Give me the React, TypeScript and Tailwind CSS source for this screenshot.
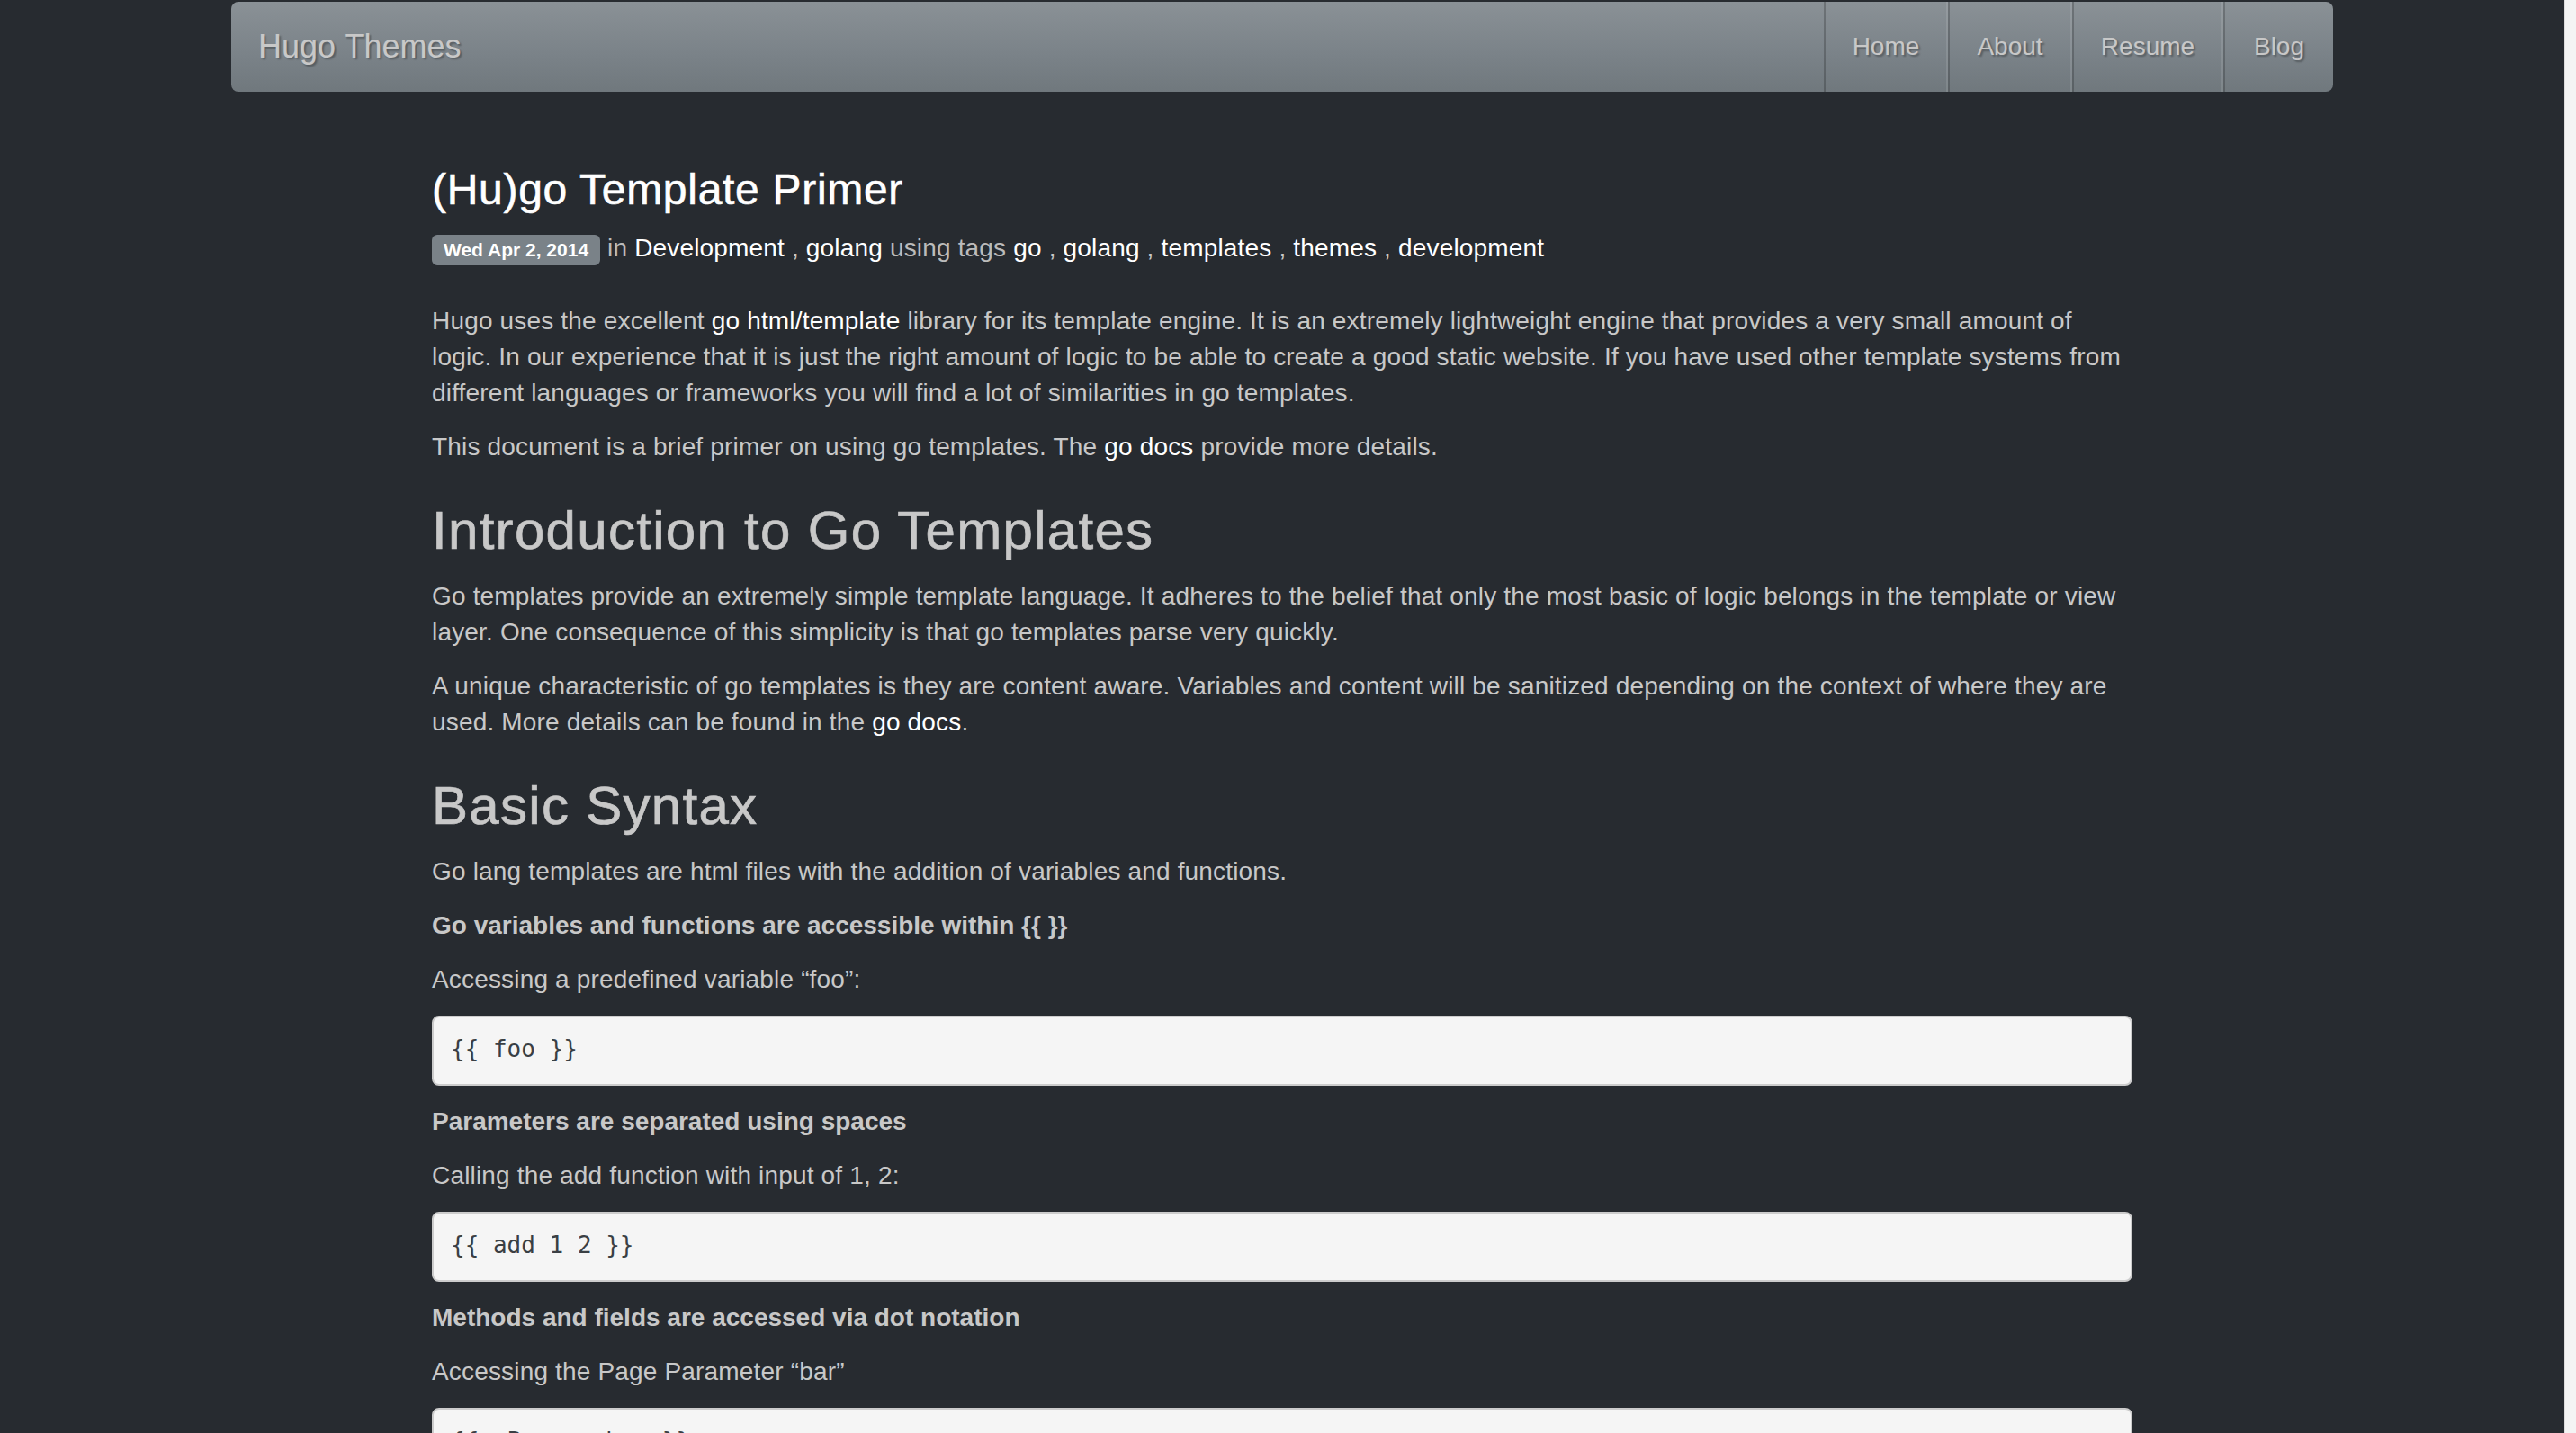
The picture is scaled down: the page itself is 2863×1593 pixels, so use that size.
import type { ReactNode } from 'react';

const NAV_LINKS = [
    { label: 'Home', width: 'w-[138px]' },
    { label: 'About', width: 'w-[138px]' },
    { label: 'Resume', width: 'w-[168px]' },
    { label: 'Blog', width: 'w-[122px]' },
];

const META_LINKS = {
    categories: ['Development', 'golang'],
    tags: ['go', 'golang', 'templates', 'themes', 'development'],
};

function A({ children }: { children: ReactNode }) {
    return <a className="text-white no-underline cursor-pointer">{children}</a>;
}

function P({ children, bold = false }: { children: ReactNode; bold?: boolean }) {
    return (
        <p className={bold ? 'mb-[20px] font-bold tracking-normal' : 'mb-[20px]'}>
            {children}
        </p>
    );
}

function H2({ children }: { children: ReactNode }) {
    return (
        <h2 className="mt-[40px] mb-[20px] text-[60px] leading-[66px] font-normal tracking-[1.3px] text-[#c8c8c8] [-webkit-text-stroke:0.7px_#c8c8c8]">
            {children}
        </h2>
    );
}

function Pre({ code }: { code: string }) {
    return (
        <pre className="mb-[20px] h-[78px] rounded-[8px] border-2 border-[#cccccc] bg-[#f5f5f5] px-[19px] pt-[16px] pb-[20px] font-['DejaVu_Sans_Mono',monospace] text-[26px] leading-[38px] tracking-normal text-[#3a3f44] overflow-hidden">
            {code}
        </pre>
    );
}

function Sep() {
    return <span className="text-[#c8c8c8]"> , </span>;
}

export default function App() {
    return (
        <div className="flex h-[1593px] w-full overflow-hidden bg-[#272b30] font-['Liberation_Sans',Arial,sans-serif] text-[28px] leading-[40px] tracking-[0.17px] text-[#c8c8c8]">
            <div className="w-[2850px] shrink-0">
                {/* Navbar */}
                <nav className="mx-auto mt-[2px] flex h-[100px] w-[2336px] items-stretch justify-between rounded-[8px] bg-[linear-gradient(#8a9196,#7a8288_60%,#70787d)] tracking-normal [text-shadow:2px_2px_2px_rgba(0,0,0,0.3)]">
                    <a className="flex items-center px-[30px] text-[36px] text-[#c8c8c8]">Hugo Themes</a>
                    <ul className="flex items-stretch">
                        {NAV_LINKS.map(item => (
                            <li
                                key={item.label}
                                className={`flex items-center justify-center border-l-2 border-r-2 border-l-[rgba(0,0,0,0.2)] border-r-[rgba(255,255,255,0.1)] text-[28px] text-[#c8c8c8] last:border-r-0 ${item.width}`}
                            >
                                {item.label}
                            </li>
                        ))}
                    </ul>
                </nav>

                {/* Post */}
                <div className="mx-auto w-[2340px]">
                    <article className="ml-[225px] w-[1890px] whitespace-nowrap">
                        <h1 className="mt-[82px] text-[48px] leading-[53px] font-normal tracking-[0.7px] text-white [-webkit-text-stroke:0.6px_white]">
                            (Hu)go Template Primer
                        </h1>

                        <div className="mt-[19px]">
                            <span className="inline-block rounded-[6px] bg-[#7a8288] px-[13px] pt-[6px] pb-[7px] text-[21px] leading-[21px] font-bold tracking-normal text-white">
                                Wed Apr 2, 2014
                            </span>{' '}
                            <span className="text-[#bbbbbb]">in </span>
                            {META_LINKS.categories.map((c, i) => (
                                <span key={c}>
                                    {i > 0 && <Sep />}
                                    <A>{c}</A>
                                </span>
                            ))}
                            <span className="text-[#bbbbbb]"> using tags </span>
                            {META_LINKS.tags.map((t, i) => (
                                <span key={t + i}>
                                    {i > 0 && <Sep />}
                                    <A>{t}</A>
                                </span>
                            ))}
                        </div>

                        <div className="mt-[41px]">
                            <P>
                                Hugo uses the excellent <A>go html/template</A> library for its template engine. It is an extremely lightweight engine that provides a very small amount of
                                <br />
                                logic. In our experience that it is just the right amount of logic to be able to create a good static website. If you have used other template systems from
                                <br />
                                different languages or frameworks you will find a lot of similarities in go templates.
                            </P>
                            <P>
                                This document is a brief primer on using go templates. The <A>go docs</A> provide more details.
                            </P>

                            <H2>Introduction to Go Templates</H2>
                            <P>
                                Go templates provide an extremely simple template language. It adheres to the belief that only the most basic of logic belongs in the template or view
                                <br />
                                layer. One consequence of this simplicity is that go templates parse very quickly.
                            </P>
                            <P>
                                A unique characteristic of go templates is they are content aware. Variables and content will be sanitized depending on the context of where they are
                                <br />
                                used. More details can be found in the <A>go docs</A>.
                            </P>

                            <H2>Basic Syntax</H2>
                            <P>Go lang templates are html files with the addition of variables and functions.</P>
                            <P bold>Go variables and functions are accessible within {'{{ }}'}</P>
                            <P>Accessing a predefined variable “foo”:</P>
                            <Pre code="{{ foo }}" />
                            <P bold>Parameters are separated using spaces</P>
                            <P>Calling the add function with input of 1, 2:</P>
                            <Pre code="{{ add 1 2 }}" />
                            <P bold>Methods and fields are accessed via dot notation</P>
                            <P>Accessing the Page Parameter “bar”</P>
                            <Pre code="{{ .Params.bar }}" />
                        </div>
                    </article>
                </div>
            </div>

            {/* scrollbar track */}
            <div className="w-[13px] shrink-0 border-l border-[#dddddd] bg-[#f4f4f4]" />
        </div>
    );
}
